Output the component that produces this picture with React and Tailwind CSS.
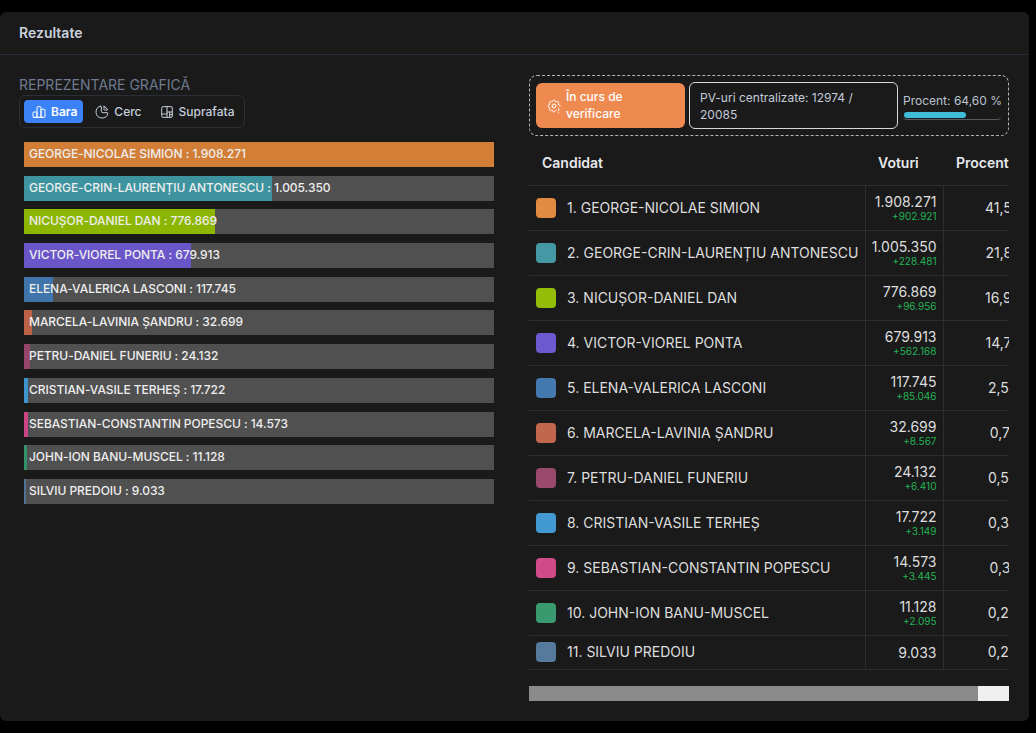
import React from "react";
import { TbChartBar, TbChartPie, TbChartTreemap, TbSettingsExclamation } from "react-icons/tb";

const candidates = [
  { name: "GEORGE-NICOLAE SIMION", votes: "1.908.271", diff: "+902.921", pct: "41,59", width: 100, bar: "#d27e37", box: "#e08a42" },
  { name: "GEORGE-CRIN-LAURENȚIU ANTONESCU", votes: "1.005.350", diff: "+228.481", pct: "21,87", width: 52.7, bar: "#3d949f", box: "#4499a5" },
  { name: "NICUȘOR-DANIEL DAN", votes: "776.869", diff: "+96.956", pct: "16,90", width: 40.7, bar: "#8db600", box: "#93bd06" },
  { name: "VICTOR-VIOREL PONTA", votes: "679.913", diff: "+562.168", pct: "14,79", width: 35.6, bar: "#6a55c9", box: "#6d59d0" },
  { name: "ELENA-VALERICA LASCONI", votes: "117.745", diff: "+85.046", pct: "2,56", width: 6.2, bar: "#3f75ab", box: "#4379ae" },
  { name: "MARCELA-LAVINIA ȘANDRU", votes: "32.699", diff: "+8.567", pct: "0,71", width: 1.7, bar: "#bd6247", box: "#c0674e" },
  { name: "PETRU-DANIEL FUNERIU", votes: "24.132", diff: "+6.410", pct: "0,52", width: 1.3, bar: "#96466a", box: "#994a6c" },
  { name: "CRISTIAN-VASILE TERHEȘ", votes: "17.722", diff: "+3.149", pct: "0,38", width: 0.95, bar: "#3e94cc", box: "#439ad2" },
  { name: "SEBASTIAN-CONSTANTIN POPESCU", votes: "14.573", diff: "+3.445", pct: "0,31", width: 0.8, bar: "#cb4585", box: "#d04a8a" },
  { name: "JOHN-ION BANU-MUSCEL", votes: "11.128", diff: "+2.095", pct: "0,24", width: 0.6, bar: "#33926a", box: "#389a6e" },
  { name: "SILVIU PREDOIU", votes: "9.033", pct: "0,20", width: 0.5, bar: "#4f7396", box: "#557a9c" },
];

const App = () => {
  return (
    <div className="h-[733px] overflow-hidden bg-black pt-3 pr-[7px] font-['Inter','Noto_Sans',sans-serif]">
      <div className="h-[709px] rounded-md bg-[#1a1a1a]">
        <div className="flex h-[43px] items-center border-b border-[#262b38] px-[19px]">
          <h2 className="text-sm font-semibold text-[#c9d1dc]">Rezultate</h2>
        </div>

        <div className="flex pt-5 pr-5 pl-[19px]">
          <div className="w-[510px] shrink-0">
            <p className="text-sm leading-[19px] text-[#6f7a90]">REPREZENTARE GRAFICĂ</p>
            <div className="mt-px inline-flex h-[33px] items-center gap-1 rounded-md border border-[#2b2e36] px-1">
              <button className="flex h-[23px] items-center gap-1 rounded bg-[#3b82f6] pr-[6px] pl-[7px] text-xs font-semibold text-white">
                <TbChartBar size={16} strokeWidth={1.5} />
                Bara
              </button>
              <button className="flex h-[23px] items-center gap-1 pr-[6px] pl-[7px] text-xs font-medium text-[#c6cedb]">
                <TbChartPie size={16} strokeWidth={1.5} />
                Cerc
              </button>
              <button className="flex h-[23px] items-center gap-1 pr-[6px] pl-[7px] text-xs font-medium text-[#c6cedb]">
                <TbChartTreemap size={16} strokeWidth={1.5} />
                Suprafata
              </button>
            </div>

            <div className="mt-[14px] ml-[5px] flex w-[470px] flex-col gap-[8.7px]">
              {candidates.map((c) => (
                <div key={c.name} className="relative h-[25px] bg-[#505050]">
                  <div className="h-full" style={{ width: `${c.width}%`, backgroundColor: c.bar }} />
                  <span className="absolute top-0 left-[5px] whitespace-nowrap text-xs leading-[24px] font-medium tracking-[-0.05px] text-[#eeeeee]">
                    {c.name} : {c.votes}
                  </span>
                </div>
              ))}
            </div>
          </div>

          <div className="w-[480px] shrink-0">
            <div className="flex h-[61px] items-center rounded-lg border border-dashed border-[#b5b5b5] pr-1 pl-[6px]">
              <div className="flex h-[45px] w-[149px] shrink-0 items-center gap-1 rounded-md bg-[#ee8a50] pl-[10px] text-xs leading-[17px] font-medium text-white">
                <TbSettingsExclamation size={16} strokeWidth={1.5} className="shrink-0" />
                <span className="mb-0.5 w-[90px]">În curs de verificare</span>
              </div>
              <div className="ml-1 flex h-[47px] w-[209px] shrink-0 items-center rounded-md border border-[#d8d8d8] px-[10px] text-xs leading-[17px] text-[#c3ccd9]">
                PV-uri centralizate: 12974 / 20085
              </div>
              <div className="ml-[5px] flex-1">
                <p className="text-xs leading-[17px] whitespace-nowrap text-[#b9c3d0]">Procent: 64,60 %</p>
                <div className="mt-[3px] h-2 w-[98px] rounded-full border-b border-[#555a63]">
                  <div className="ml-px h-[6px] w-[62px] rounded-full bg-[#3fbcd8]" />
                </div>
              </div>
            </div>

            <div className="mt-[9px] overflow-hidden">
              <table className="w-[533px] table-fixed border-collapse text-sm text-[#dedede]">
                <colgroup>
                  <col className="w-[336px]" />
                  <col className="w-[78px]" />
                  <col className="w-[119px]" />
                </colgroup>
                <thead>
                  <tr className="h-[40px] text-left text-[#e6e8ec]">
                    <th className="pb-1 pl-[13px] font-semibold">Candidat</th>
                    <th className="pb-1 pl-[13px] font-semibold">Voturi</th>
                    <th className="pb-1 pl-[13px] font-semibold">Procent</th>
                  </tr>
                </thead>
                <tbody>
                  {candidates.map((c, i) => (
                    <tr key={c.name} className={`border-y border-[#2e2e2e] ${c.diff ? "h-[45px]" : "h-[34px]"}`}>
                      <td className="pl-[7px]">
                        <div className="flex items-center gap-[11px]">
                          <span className="size-5 shrink-0 rounded" style={{ backgroundColor: c.box }} />
                          <span className="whitespace-nowrap">
                            {i + 1}. {c.name}
                          </span>
                        </div>
                      </td>
                      <td className="border-x border-[#2e2e2e] pr-[6px] text-right">
                        <div className="leading-[17px]">{c.votes}</div>
                        {c.diff && <div className="mt-px text-[10px] leading-[11px] text-[#22b455]">{c.diff}</div>}
                      </td>
                      <td className="text-center">{c.pct}</td>
                    </tr>
                  ))}
                </tbody>
              </table>
            </div>

            <div className="mt-4 h-[15px] bg-[#f0f0f0]">
              <div className="h-full w-[449px] bg-[#8a8a8a]" />
            </div>
          </div>
        </div>
      </div>
    </div>
  );
};

export default App;
